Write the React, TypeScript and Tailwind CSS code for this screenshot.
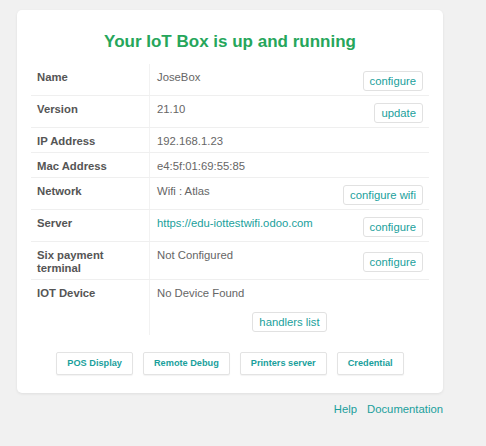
import React from 'react';

const teal = 'text-[#1a9f9c]';

const SmallButton = ({ children }: { children: React.ReactNode }) => (
  <button className={`h-[20px] px-[6px] border border-[#e1e1e1] rounded-[3px] bg-white text-[11.3px] leading-[18px] ${teal} whitespace-nowrap`}>
    {children}
  </button>
);

interface Row {
  label: React.ReactNode;
  value: React.ReactNode;
  action?: string;
}

const rows: Row[] = [
  { label: 'Name', value: 'JoseBox', action: 'configure' },
  { label: 'Version', value: '21.10', action: 'update' },
  { label: 'IP Address', value: '192.168.1.23' },
  { label: 'Mac Address', value: 'e4:5f:01:69:55:85' },
  { label: 'Network', value: 'Wifi : Atlas', action: 'configure wifi' },
  { label: 'Server', value: <span className={teal}>https://edu-iottestwifi.odoo.com</span>, action: 'configure' },
  { label: <>Six payment<br />terminal</>, value: 'Not Configured', action: 'configure' },
];

const footerButtons = ['POS Display', 'Remote Debug', 'Printers server', 'Credential'];

export default function App() {
  return (
    <div className="min-h-screen bg-[#f1f1f1] pt-[10px] pl-[17px] font-['Liberation_Sans',Arial,sans-serif]">
      <div className="w-[426px]">
        <div className="bg-white rounded-[5px] shadow-[0_1px_3px_rgba(0,0,0,0.08)] px-[14px] pt-[22px] pb-[18px]">
          <h2 className="text-center text-[17px] leading-[20px] font-bold text-[#26a65b] mb-[12px]">
            Your IoT Box is up and running
          </h2>

          <div className="flex flex-col">
            {rows.map((row, i) => (
              <div key={i} className="flex border-b border-[#efefef]">
                <div className="w-[119px] shrink-0 border-r border-[#f2f2f2] pl-[6px] pt-[7px] pb-[4px] text-[11.3px] leading-[13px] font-bold text-[#555]">
                  {row.label}
                </div>
                <div className="flex-1 flex justify-between items-start pl-[7px] pr-[6px] pt-[7px] pb-[4px] text-[11.3px] leading-[13px] text-[#666]">
                  <span>{row.value}</span>
                  {row.action && (
                    <span className="self-center flex">
                      <SmallButton>{row.action}</SmallButton>
                    </span>
                  )}
                </div>
              </div>
            ))}
            <div className="flex">
              <div className="w-[119px] shrink-0 border-r border-[#f2f2f2] pl-[6px] pt-[7px] pb-[3px] text-[11.3px] leading-[13px] font-bold text-[#555]">
                IOT Device
              </div>
              <div className="flex-1 flex flex-col pl-[7px] pr-[6px] pt-[7px] pb-[3px] text-[11.3px] leading-[13px] text-[#666]">
                <span>No Device Found</span>
                <div className="flex justify-center mt-[12px] -ml-[7px] -mr-[6px]">
                  <SmallButton>handlers list</SmallButton>
                </div>
              </div>
            </div>
          </div>

          <div className="flex justify-center gap-[10px] mt-[17px]">
            {footerButtons.map((b) => (
              <button
                key={b}
                className={`h-[23px] px-[10px] border border-[#e3e3e3] rounded-[2px] bg-white shadow-[0_1px_1px_rgba(0,0,0,0.05)] text-[9.2px] font-bold ${teal}`}
              >
                {b}
              </button>
            ))}
          </div>
        </div>

        <div className={`flex justify-end gap-[10px] mt-[9px] text-[11.3px] leading-[14px] ${teal}`}>
          <span>Help</span>
          <span>Documentation</span>
        </div>
      </div>
    </div>
  );
}
